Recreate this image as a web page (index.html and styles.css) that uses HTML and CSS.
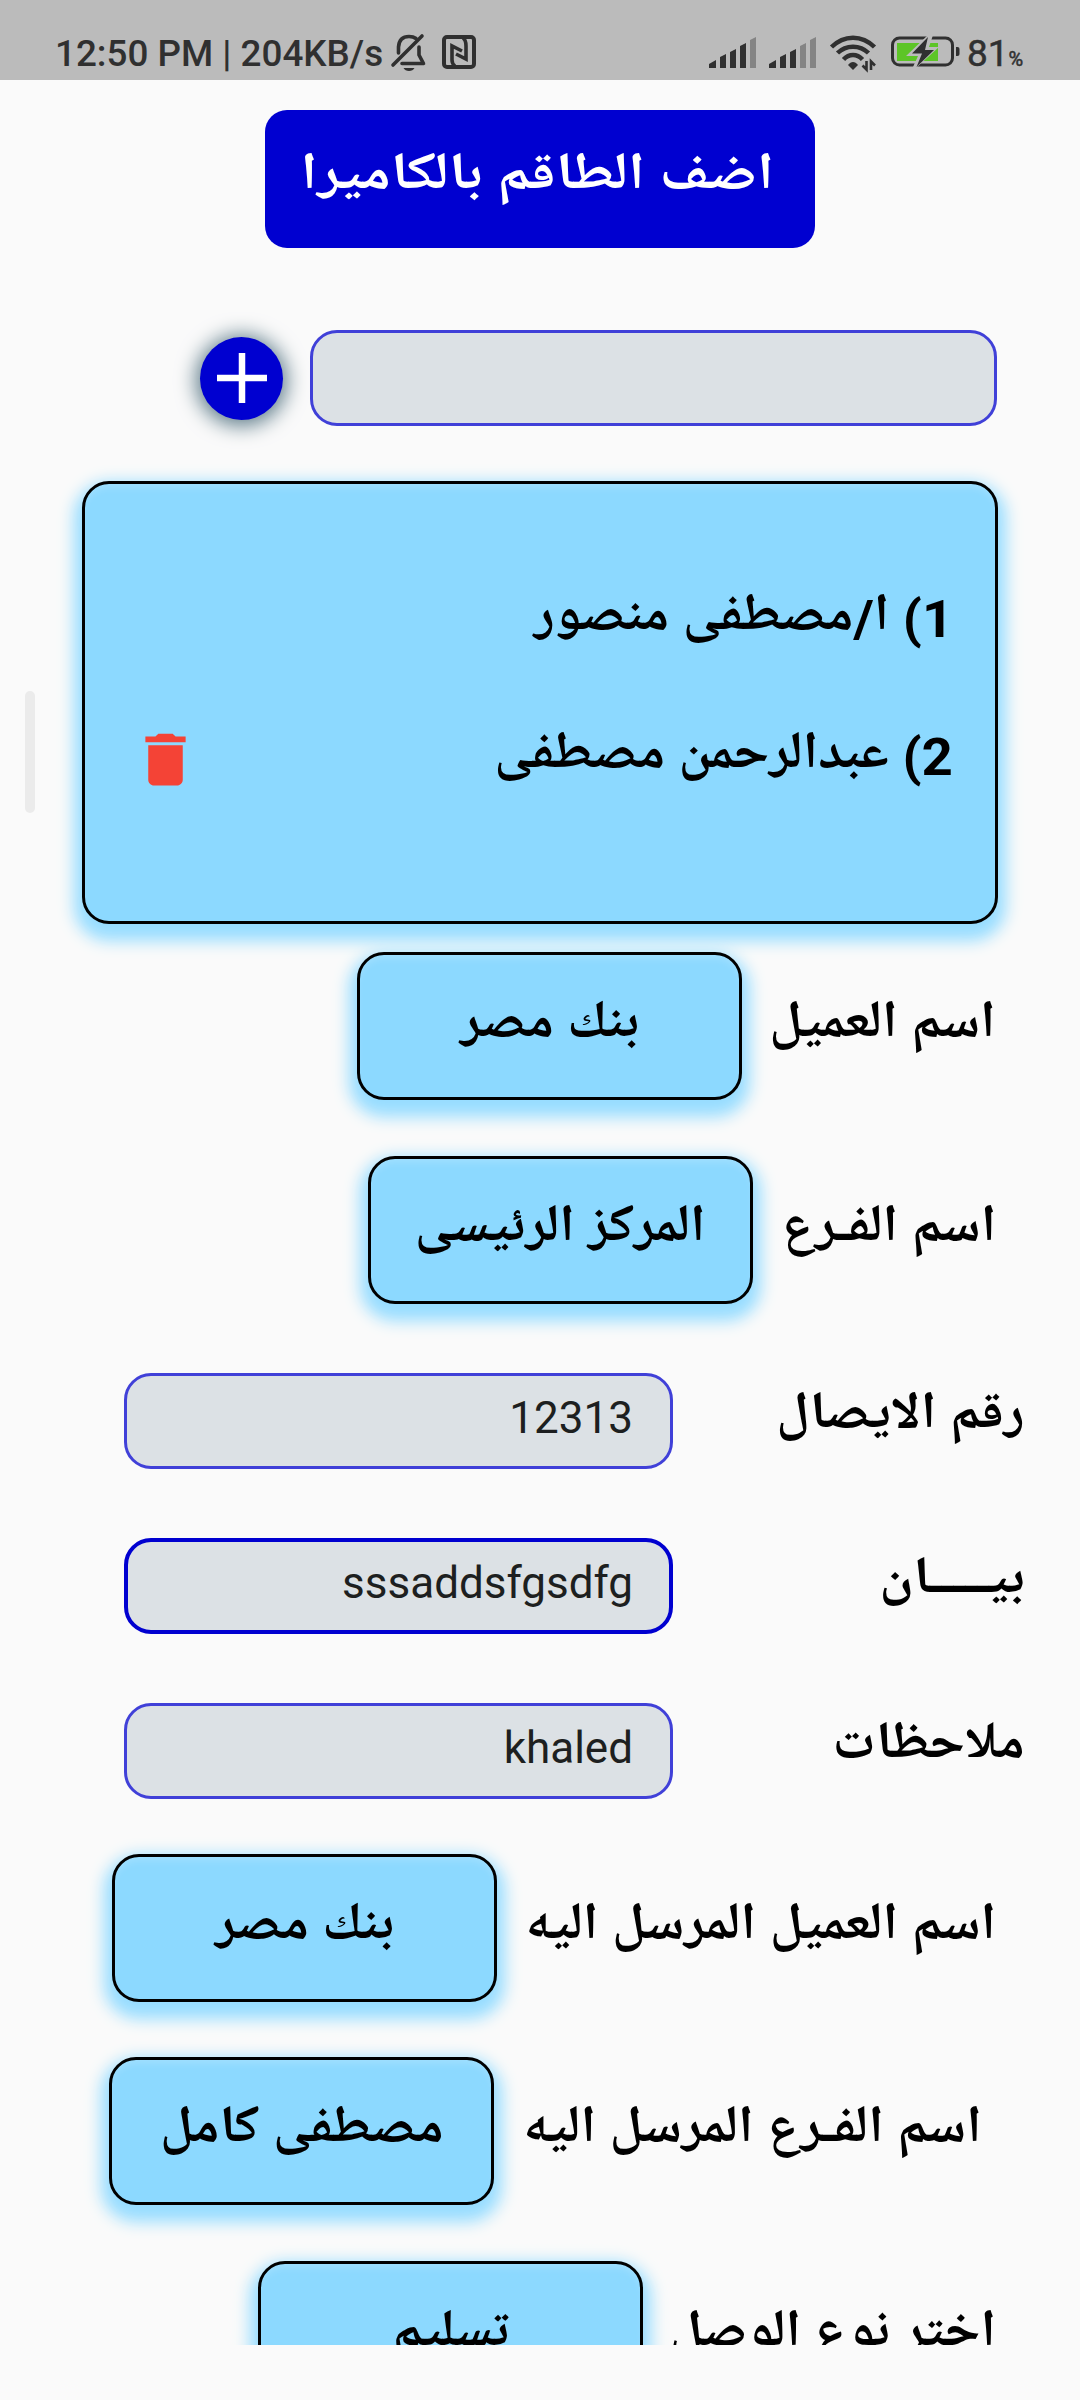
FILE: index.html
```html
<!DOCTYPE html>
<html lang="ar">
<head>
<meta charset="utf-8">
<title>اضف الطاقم</title>
<link rel="stylesheet" href="styles.css">
</head>
<body>
<header class="status">
  <span class="clock">12:50 PM | 204KB/s</span>
  <svg class="bell" viewBox="0 0 36 38" width="36" height="38"><g fill="none" stroke="#303030" stroke-width="3.6"><path d="M7.500 19V13C8 6 12 2.500 18 2.500c3 0 5 .5 7 2M28 13V21L32.500 29.500H11" stroke-linejoin="round" stroke-linecap="round"/><path d="M2 31L31 2" stroke-linecap="round"/></g><path d="M12.500 34h11c-1 2-3 3-5.500 3s-4.500-1-5.500-3z" fill="#303030"/></svg>
  <svg class="nfc" viewBox="0 0 34 34" width="34" height="34"><g fill="none" stroke="#303030"><rect x="2" y="2" width="30" height="30" rx="3" stroke-width="4"/><path d="M13 31Q10 29 10 25V11L20 16M14 19L24 24V11Q24 5 21 3" stroke-width="3.600"/></g></svg>
  <span class="grow"></span>
  <svg class="signal" viewBox="0 0 48 32" width="48" height="32"><g fill="#303030"><path d="M0 31V27L7 23V31zM11 31V20L17 17V31zM21 31V15L27 12V31zM31 31V9L37 6V31z"/><path d="M41 31V3L47 0V31z" fill="#848484"/></g></svg>
  <svg class="signal second" viewBox="0 0 48 32" width="48" height="32"><g fill="#303030"><path d="M0 31V27L7 23V31zM11 31V20L17 17V31zM21 31V15L27 12V31z"/><path d="M31 31V9L37 6V31zM41 31V3L47 0V31z" fill="#848484"/></g></svg>
  <svg class="wifi" viewBox="0 0 46 36" width="46" height="36"><g fill="none" stroke="#303030" stroke-width="4.500"><path d="M1.500 12C14-.5 32-.5 44.500 12M7.500 18C16 9.500 30 9.500 38.500 18M13.500 24.500C19 18.500 27 18.500 32.500 24.500"/><path d="M36.500 26v8.500l-4-4M41 35v-8.500l4 4" stroke-width="2.600"/></g><path d="M18 30c3-4 7-4 10 0l-5 5z" fill="#303030"/></svg>
  <svg class="battery" viewBox="0 0 70 32" width="70" height="32"><rect x="1.500" y="2" width="60" height="27" rx="7" fill="none" stroke="#303030" stroke-width="3"/><path d="M6 7h41v18H6z" fill="#5dc527"/><path d="M65 11h1.500q2 0 2 2v5q0 2-2 2H65z" fill="#303030"/><path d="M37-1h5L38 11h10L26 31H22l5-11H15z" fill="#bbb"/><path d="M37 1L21 17.500h10L25.500 31 43 14H34z" fill="#303030"/></svg>
  <span class="pct">81<small>%</small></span>
</header>
<main class="page" dir="rtl">
  <button class="camera"><span>اضف الطاقم بالكاميرا</span></button>
  <div class="add-row">
    <div class="field wide"></div>
    <div class="add"><svg viewBox="0 0 50 50" width="50" height="50"><path d="M25 0v50M0 25h50" stroke="#fff" stroke-width="6.500"/></svg></div>
  </div>
  <section class="card crew">
    <div class="member"><span>1) ا/مصطفى منصور</span></div>
    <div class="member second"><span>2) عبدالرحمن مصطفى</span><svg viewBox="0 0 24 24" width="69" height="69"><path fill="#f44336" d="M6 19c0 1.100.9 2 2 2h8c1.100 0 2-.9 2-2V7H6v12zM19 4h-3.500l-1-1h-5l-1 1H5v2h14V4z"/></svg></div>
  </section>
  <div class="pick"><div class="label client"><span>اسم العميل</span></div><div class="card choice"><span>بنك مصر</span></div></div>
  <div class="pick"><div class="label branch"><span>اسم الفـرع</span></div><div class="card choice"><span>المركز الرئيسى</span></div></div>
  <div class="entry first"><div class="label"><span>رقم الايصال</span></div><div class="field">12313</div></div>
  <div class="entry"><div class="label statement"><span>بيـــــان</span></div><div class="field focus">sssaddsfgsdfg</div></div>
  <div class="entry"><div class="label notes"><span>ملاحظات</span></div><div class="field">khaled</div></div>
  <div class="pick after"><div class="label to-client"><span>اسم العميل المرسل اليه</span></div><div class="card choice"><span>بنك مصر</span></div></div>
  <div class="pick inset"><div class="label to-branch"><span>اسم الفـرع المرسل اليه</span></div><div class="card choice"><span>مصطفى كامل</span></div></div>
  <div class="pick"><div class="label kind"><span>اختر نوع الوصل</span></div><div class="card choice"><span>تسليم</span></div></div>
  <i class="thumb"></i>
</main>
</body>
</html>
```
FILE: styles.css
```css
* { box-sizing: border-box; }
body { margin: 0; height: 2400px; background: #fafafa; overflow: hidden; font-family: Roboto, "Noto Naskh Arabic UI", "Noto Naskh Arabic", "Noto Sans Arabic", "DejaVu Sans", sans-serif; }
svg { display: block; flex: none; overflow: visible; }
.status { height: 80px; background: #bbb; display: flex; align-items: flex-start; padding: 34px 55px 0 55px; color: #303030; }
.clock { font-weight: 500; font-size: 36.800px; line-height: 39px; width: 336px; white-space: nowrap; }
.nfc { margin: 1px 0 0 15px; }
.grow { flex: 1; }
.signal { margin-top: 3px; }
.signal.second { margin-left: 12px; }
.wifi { margin: 1px 0 0 13px; }
.battery { margin: 2px 0 0 15px; }
.pct { font-weight: 400; font-size: 37px; line-height: 39px; margin-left: 6px; width: 58px; white-space: nowrap; -webkit-text-stroke: .5px #303030; }
.pct small { font-size: 20px; }
.page { position: relative; height: 2265px; overflow: hidden; padding-top: 30px; display: flex; flex-direction: column; }
.camera { align-self: center; width: 550px; height: 138px; flex: none; border: 0; border-radius: 22px; background: #0000d0; color: #fff; font: 700 52.250px/66px Roboto, "Noto Naskh Arabic UI", "Noto Naskh Arabic", "Noto Sans Arabic", "DejaVu Sans", sans-serif; padding: 0 5px 0 0; white-space: nowrap; }
.camera span, .choice span { display: inline-block; transform: scaleX(1.045); }
.camera span { transform: scaleX(1.142); }
.add-row { display: flex; align-items: center; gap: 27px; height: 96px; margin: 82px 83px 0 0; flex: none; }
.field { width: 549px; height: 96px; border: 3px solid #4040d8; border-radius: 27px; background: #dce1e5; color: #1d1f20; font-size: 44px; line-height: 84px; padding-right: 37px; direction: ltr; text-align: right; flex: none; }
.field.wide { width: 687px; }
.field.focus { border: 4px solid #0000d0; line-height: 83px; padding-right: 36px; }
.add { width: 83px; height: 83px; border-radius: 50%; background: #0000d0; display: grid; place-items: center; box-shadow: 0 2px 20px 4px #607d8b; }
.card { border: 3px solid #000; border-radius: 27px; background: #8cd9ff; box-shadow: 0 9px 16px 8px #98ddff, inset 0 7px 9px -4px rgba(255, 255, 255, .2); flex: none; color: #000; }
.crew { width: 916px; height: 443px; margin: 55px 82px 0; padding: 101px 42px 0 46px; }
.member { display: flex; justify-content: space-between; align-items: center; height: 69px; font-size: 52.250px; font-weight: 700; line-height: 69px; white-space: nowrap; }
.member span { transform: scaleX(1.045); transform-origin: right; }
.member.second { margin-top: 69px; }
.member svg { margin-top: 4px; }
.pick { display: flex; height: 148px; margin: 55.500px 84px 0 0; flex: none; }
.crew + .pick { margin-top: 28px; }
.label, .choice { font-size: 52.250px; font-weight: 700; line-height: 66px; white-space: nowrap; flex: none; color: #000; }
.label span { display: inline-block; transform: scaleX(1.050); transform-origin: right; }
.statement span { transform: scaleX(1.080); }
.notes span { transform: scaleX(1.035); }
.pick .label { padding-top: 42px; }
.choice { width: 385px; display: flex; justify-content: center; padding-top: 39px; }
.client { width: 254px; }
.branch { width: 243px; }
.to-client { width: 499px; }
.to-branch { width: 488px; }
.kind { width: 353px; }
.pick.inset { margin-right: 98px; }
.entry { display: flex; height: 96px; margin: 69px 55px 0 0; flex: none; }
.entry.first { margin-top: 69.500px; }
.entry .label { width: 352px; padding-top: 12px; }
.pick.after { margin-top: 54.500px; }
.thumb { position: absolute; left: 25px; top: 611px; width: 10px; height: 122px; border-radius: 5px; background: #ebebeb; }
```
